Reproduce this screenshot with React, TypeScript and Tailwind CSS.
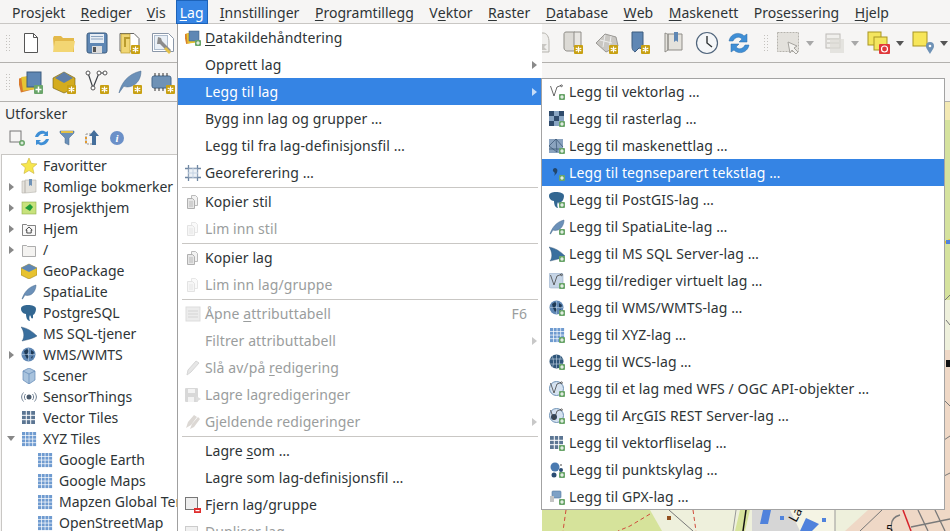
import React from 'react';

type N = React.ReactNode;

const S16 = ({ children }: { children: N }) => (
  <svg width="16" height="16" viewBox="0 0 16 16" className="shrink-0">{children}</svg>
);
const S24 = ({ children, w = 24 }: { children: N; w?: number }) => (
  <svg width={w} height="24" viewBox={`0 0 ${w} 24`} className="shrink-0">{children}</svg>
);

const Plus = ({ x = 10, y = 10 }: { x?: number; y?: number }) => (
  <g>
    <rect x={x} y={y} width="6" height="6" rx="1" fill="#6aa56a" />
    <path d={`M${x + 3} ${y + 1.2}v3.6M${x + 1.2} ${y + 3}h3.6`} stroke="#fff" strokeWidth="1.2" />
  </g>
);
const Ast = ({ x = 15, y = 15 }: { x?: number; y?: number }) => (
  <g>
    <rect x={x} y={y} width="9" height="9" rx="1" fill="#c8a012" />
    <path d={`M${x + 4.5} ${y + 1.5}v6M${x + 1.7} ${y + 3}l5.6 3M${x + 7.3} ${y + 3}l-5.6 3`} stroke="#fff" strokeWidth="1.2" />
  </g>
);
const Feather = ({ c = '#6b90b8' }: { c?: string }) => (
  <path d="M1 15C3 9 7 3 15 1c0 5-3 9-6 10-2 .7-4 .5-5 0L1.500 15z" fill={c} stroke="#47688c" strokeWidth=".5" />
);
const Globe = () => (
  <g>
    <circle cx="7.500" cy="7.500" r="7" fill="#5f87b4" />
    <path d="M3 4l3-2 2 2-2 3 2 3-2 2-2-4zM10 3l3 2-1 3-2-1zM10 10l2-1-1 3z" fill="#1f3a56" />
    <path d="M1 7.500h13M7.500 1v13" stroke="#c6d6e6" strokeWidth=".5" />
  </g>
);
const Elephant = () => (
  <path d="M0 4c0-3 3-4 7-4s8 1 8 4-2 6-3 6v3c-1 1-2 0-2-1l-1-2c-1 2-1 4 0 6-3 0-4-4-4-7C2 9 0 6 0 4z" fill="#336791" />
);
const Sail = () => (
  <path d="M0 1c6 1 11 4 16 9-3 2-10 4-15 5 3-4 2-10-1-14z" fill="#3a6f9e" stroke="#28496b" strokeWidth=".4" />
);
const Grid = ({ c = '#6f9bd0' }: { c?: string }) => (
  <g fill={c}>
    {[1, 4.700, 8.400, 12.100].map(x => [1, 4.700, 8.400, 12.100].map(y => <rect key={`${x}${y}`} x={x} y={y} width="3" height="3" />))}
  </g>
);
const VGrid = () => (
  <g>
    <rect x="1" y="1" width="13" height="13" fill="#5c7693" />
    <path d="M5.300 1v13M9.700 1v13M1 5.300h13M1 9.700h13" stroke="#fff" />
  </g>
);
const CopyDoc = ({ off = false }: { off?: boolean }) => (
  <g opacity={off ? 0.35 : 1}>
    <path d="M6.500 1.500h4l2 2v8h-6z" fill="#f2f2f2" stroke="#bbb" />
    <path d="M2.500 4.500h5l2 2v8h-7z" fill="#e6e6e6" stroke="#b0b0b0" />
    <path d="M4 8h4M4 10h4M4 12h4" stroke="#bbb" />
  </g>
);
const VNode = () => (
  <g fill="none" stroke="#444" strokeWidth=".8">
    <path d="M1.500 2L5 12l3-9 4-1.500" />
    <circle cx="12.500" cy="1.800" r=".9" />
  </g>
);

type MI = { t?: N; ic?: N; off?: boolean; sub?: boolean; hi?: boolean; key2?: string; sep?: boolean };
const U = ({ children }: { children: N }) => <span className="underline underline-offset-2">{children}</span>;

const mainMenu: MI[] = [
  { t: <><U>D</U>atakildehåndtering</>, ic: <S16><rect x="0" y="3" width="10" height="10" fill="#d9822b" transform="rotate(-12 5 8)" /><rect x="2" y="3" width="10" height="10" fill="#e6c533" transform="rotate(-6 7 8)" /><rect x="4" y="1" width="10" height="10" fill="#5f87b4" stroke="#3d5c7e" strokeWidth=".5" /><Plus /></S16> },
  { t: 'Opprett lag', sub: true },
  { t: 'Legg til lag', sub: true, hi: true },
  { t: 'Bygg inn lag og grupper …' },
  { t: 'Legg til fra lag-definisjonsfil …' },
  { t: 'Georeferering …', ic: <S16><path d="M0 3.500h16M0 12.500h16M3.500 0v16M12.500 0v16" stroke="#6f87a3" strokeWidth="1.300" /><path d="M3.500 3.500h9v9h-9z" fill="#dfe7f0" opacity=".6" /><path d="M8 3v10M3 8h10" stroke="#c4d2e2" /></S16> },
  { sep: true },
  { t: 'Kopier stil', ic: <S16><CopyDoc /></S16> },
  { t: 'Lim inn stil', off: true, ic: <S16><CopyDoc off /></S16> },
  { sep: true },
  { t: 'Kopier lag', ic: <S16><CopyDoc /></S16> },
  { t: 'Lim inn lag/gruppe', off: true, ic: <S16><CopyDoc off /></S16> },
  { sep: true },
  { t: <>Åpne <U>a</U>ttributtabell</>, off: true, key2: 'F6', ic: <S16><rect x="1" y="1" width="14" height="14" fill="#ececec" stroke="#ddd" /><path d="M3 5h10M3 8h10M3 11h10" stroke="#d4d4d4" /></S16> },
  { t: 'Filtrer attributtabell', off: true, sub: true },
  { t: <>Slå av/på <U>r</U>edigering</>, off: true, ic: <S16><path d="M2 15l1-5 8-9 3 2-8 9z" fill="#e6e6e6" stroke="#d6d6d6" /></S16> },
  { t: 'Lagre lagredigeringer', off: true, ic: <S16><rect x="0" y="1" width="13" height="14" rx="1" fill="#d8d8d8" /><rect x="3" y="2" width="7" height="4" fill="#f3f3f3" /><rect x="3" y="10" width="6" height="5" fill="#f3f3f3" /><path d="M11 9l5 3-5 3z" fill="#ddd" /></S16> },
  { t: 'Gjeldende redigeringer', off: true, sub: true, ic: <S16><path d="M1 14l2-6 6-7 3 2-6 8zM5 15l2-5 6-7 2 2-6 8z" fill="#dcd8d4" /></S16> },
  { sep: true },
  { t: <>Lagre <U>s</U>om …</> },
  { t: 'Lagre som lag-definisjonsfil …' },
  { t: 'Fjern lag/gruppe', ic: <S16><rect x=".5" y=".5" width="12" height="12" fill="#eee" stroke="#777" /><rect x="9" y="11" width="7" height="5" fill="#e02f2f" /><rect x="10.500" y="13" width="4" height="1.200" fill="#fff" /></S16> },
  { t: 'Dupliser lag', off: true, ic: <S16><rect x=".5" y="2.500" width="12" height="12" fill="#f0f0f0" stroke="#ccc" /></S16> },
];

const subMenu: MI[] = [
  { t: 'Legg til vektorlag …', ic: <S16><VNode /><Plus /></S16> },
  { t: 'Legg til rasterlag …', ic: <S16><g fill="#2f4b6c"><rect x="0" y="0" width="5" height="5" /><rect x="10" y="0" width="5" height="5" /><rect x="5" y="5" width="5" height="5" /><rect x="0" y="10" width="5" height="5" /></g><g fill="#8aa6c4"><rect x="5" y="0" width="5" height="5" /><rect x="0" y="5" width="5" height="5" /><rect x="10" y="5" width="5" height="5" /><rect x="5" y="10" width="5" height="5" /></g><Plus /></S16> },
  { t: 'Legg til maskenettlag …', ic: <S16><rect x="0" y="1" width="14" height="14" fill="#8aa3bf" /><path d="M0 8l7-7 1 13zM7 1l7 8M0 11h14" stroke="#34506f" strokeWidth=".7" fill="none" /><Plus /></S16> },
  { t: 'Legg til tegnseparert tekstlag …', hi: true, ic: <S16><path d="M6 3c3 0 3 4 1 6l-2 2c1-2 1-3 0-4-2-1-1-4 1-4z" fill="#22466b" /><Plus /></S16> },
  { t: 'Legg til PostGIS-lag …', ic: <S16><Elephant /><Plus /></S16> },
  { t: 'Legg til SpatiaLite-lag …', ic: <S16><Feather /><Plus /></S16> },
  { t: 'Legg til MS SQL Server-lag …', ic: <S16><Sail /><Plus /></S16> },
  { t: 'Legg til/rediger virtuelt lag …', ic: <S16><rect x="0" y="0" width="14" height="15" rx="2" fill="#c6d5e6" stroke="#8aa3bf" strokeWidth=".5" /><VNode /><Plus /></S16> },
  { t: 'Legg til WMS/WMTS-lag …', ic: <S16><Globe /><Plus /></S16> },
  { t: 'Legg til XYZ-lag …', ic: <S16><Grid /><Plus /></S16> },
  { t: 'Legg til WCS-lag …', ic: <S16><circle cx="7.500" cy="7.500" r="7" fill="#2f5679" /><path d="M1 5h13M1 10h13M7.500 1v13M3 2c2 4 2 8 0 12M12 2c-2 4-2 8 0 12" stroke="#c6d6e6" strokeWidth=".6" fill="none" /><Plus /></S16> },
  { t: 'Legg til et lag med WFS / OGC API-objekter …', ic: <S16><circle cx="7.500" cy="7.500" r="7" fill="#d5e2f0" stroke="#6f92b6" /><VNode /><Plus /></S16> },
  { t: <>Legg til Ar<U>c</U>GIS REST Server-lag …</>, ic: <S16><circle cx="7.500" cy="7.500" r="7" fill="#d5e2f0" stroke="#6f92b6" /><circle cx="5" cy="9" r="3" fill="#33475c" /><VNode /><Plus /></S16> },
  { t: 'Legg til vektorfliselag …', ic: <S16><VGrid /><Plus /></S16> },
  { t: 'Legg til punktskylag …', ic: <S16><circle cx="6" cy="5" r="4.500" fill="#4a7ab0" /><circle cx="5" cy="13" r="2.500" fill="#2a4c73" /><circle cx="12" cy="3" r="1" fill="#888" /><circle cx="12" cy="8" r="2" fill="#2a4c73" /><Plus /></S16> },
  { t: 'Legg til GPX-lag …', ic: <S16><rect x="3" y="2" width="9" height="7" rx="1" fill="#7ea1c6" stroke="#557aa0" strokeWidth=".6" /><path d="M1 7h4v6H1z" fill="#c5c5c5" /><Plus /></S16> },
];

const tree: { t: string; ic: N; arrow?: 'r' | 'd'; lvl?: boolean }[] = [
  { t: 'Favoritter', ic: <S16><path d="M8 0l2.300 5.400 5.700.5-4.300 3.800 1.300 5.800L8 12.500 3 15.500l1.300-5.800L0 5.900l5.700-.5z" fill="#f6e64d" stroke="#c9b23a" strokeWidth=".6" /></S16> },
  { t: 'Romlige bokmerker', arrow: 'r', ic: <S16><path d="M1 2h3v12H1zM4 1h11v12l-11 1z" fill="#e4e2dc" stroke="#b5b3ad" strokeWidth=".6" /><path d="M8 0h3v7l-1.500-1L8 7z" fill="#6f92b6" /></S16> },
  { t: 'Prosjekthjem', arrow: 'r', ic: <S16><rect x="1" y="2" width="14" height="12" fill="#c7e27c" stroke="#8fb04c" strokeWidth=".6" /><path d="M4 8l5-4 3 3-3 4z" fill="#1e9c39" /></S16> },
  { t: 'Hjem', arrow: 'r', ic: <S16><path d="M1.500 3.500h4l1 1h8v10h-13z" fill="#f8f8f8" stroke="#666" strokeWidth=".8" /><path d="M8 6L4.800 9h1v3h4.400V9h1z" fill="none" stroke="#222" strokeWidth=".8" /></S16> },
  { t: '/', arrow: 'r', ic: <S16><path d="M1.500 3.500h4l1 1h8v10h-13z" fill="#f4f3f1" stroke="#999" strokeWidth=".8" /></S16> },
  { t: 'GeoPackage', ic: <S16><path d="M0 5l8-4 8 4v7l-8 4-8-4z" fill="#e7c22f" stroke="#8c7416" strokeWidth=".5" /><path d="M0 5l8-4 8 4-8 4z" fill="#5f87b4" /></S16> },
  { t: 'SpatiaLite', ic: <S16><Feather /></S16> },
  { t: 'PostgreSQL', ic: <S16><Elephant /></S16> },
  { t: 'MS SQL-tjener', ic: <S16><Sail /></S16> },
  { t: 'WMS/WMTS', arrow: 'r', ic: <S16><Globe /></S16> },
  { t: 'Scener', ic: <S16><path d="M8 0l6 3v9l-6 4-6-4V3z" fill="#a9c3dd" stroke="#5f87b4" strokeWidth=".7" /><path d="M2 3l6 3 6-3M8 6v10" stroke="#5f87b4" fill="none" strokeWidth=".7" /></S16> },
  { t: 'SensorThings', ic: <S16><circle cx="8" cy="8" r="2.500" fill="#4a5a6c" /><path d="M4.500 5c-1.500 2-1.500 4 0 6M11.500 5c1.500 2 1.500 4 0 6M2.500 3.500c-2.500 3-2.500 6 0 9M13.500 3.500c2.500 3 2.500 6 0 9" fill="none" stroke="#6f7f92" /></S16> },
  { t: 'Vector Tiles', ic: <S16><VGrid /></S16> },
  { t: 'XYZ Tiles', arrow: 'd', ic: <S16><Grid /></S16> },
  { t: 'Google Earth', lvl: true, ic: <S16><Grid /></S16> },
  { t: 'Google Maps', lvl: true, ic: <S16><Grid /></S16> },
  { t: 'Mapzen Global Terrain', lvl: true, ic: <S16><Grid /></S16> },
  { t: 'OpenStreetMap', lvl: true, ic: <S16><Grid /></S16> },
];

const menuBar: { t: N; on?: boolean; wide?: boolean }[] = [
  { t: <>Pros<U>j</U>ekt</> },
  { t: <><U>R</U>ediger</> },
  { t: <><U>V</U>is</> },
  { t: <><U>L</U>ag</>, on: true },
  { t: <><U>I</U>nnstillinger</>, wide: true },
  { t: <><U>P</U>rogramtillegg</>, wide: true },
  { t: <>V<U>e</U>ktor</>, wide: true },
  { t: <><U>R</U>aster</>, wide: true },
  { t: <><U>D</U>atabase</>, wide: true },
  { t: <><U>W</U>eb</>, wide: true },
  { t: <><U>M</U>askenett</>, wide: true },
  { t: <>Pro<U>s</U>essering</>, wide: true },
  { t: <><U>H</U>jelp</>, wide: true },
];

const Grip = () => (
  <div className="w-[5px] h-[17px] shrink-0 grid grid-cols-2 gap-y-px content-between">
    {Array.from({ length: 12 }).map((_, i) => <span key={i} className="w-px h-px bg-[#c4c2be]" />)}
  </div>
);
const Drop = ({ off }: { off?: boolean }) => (
  <svg width="8" height="5" viewBox="0 0 8 5" className="shrink-0"><path d="M0 0h8L4 5z" fill={off ? '#a8a8a8' : '#555'} /></svg>
);
const Btn = ({ children, w = 33 }: { children: N; w?: number }) => (
  <div className="flex items-center justify-center shrink-0" style={{ width: w }}>{children}</div>
);

const MenuRow = ({ m, main }: { m: MI; main?: boolean }) => (
  <div className={`h-[27px] flex items-center pr-[5px] tracking-[0.1px] ${main ? 'pl-[7px]' : 'pl-[8px]'} ${m.hi ? 'bg-[#3584e4] text-white' : m.off ? 'text-[#9a9d9d]' : 'text-[#2e3436]'}`}>
    <div className="w-[20px] shrink-0 flex">{m.ic}</div>
    <span className="whitespace-nowrap">{m.t}</span>
    <span className="flex-1" />
    {m.key2 && <span className="mr-[10px]">{m.key2}</span>}
    {m.sub && (
      <svg width="5" height="8" viewBox="0 0 5 8"><path d="M0 0l5 4-5 4z" fill={m.hi ? '#c6dcf7' : m.off ? '#c8c8c8' : '#8a8a8a'} /></svg>
    )}
  </div>
);

export default function App() {
  return (
    <div className="relative w-[950px] h-[531px] overflow-hidden flex flex-col bg-[#f6f5f4] text-[14px] text-[#2e3436]" style={{ fontFamily: '"Noto Sans", sans-serif' }}>
      {/* Menylinje */}
      <div className="h-[24px] shrink-0 flex pl-[4.500px] border-b border-[#c9c7c4] tracking-[0.03px]">
        {menuBar.map((m, i) => (
          <div key={i} className={`h-[24px] flex items-center whitespace-nowrap ${m.on ? 'bg-[#3584e4] text-white border border-[#1e63b8] px-[3px] ml-[2.500px] mr-[4.500px]' : m.wide ? 'px-[7.750px]' : 'px-[7.500px]'}`}>{m.t}</div>
        ))}
      </div>

      {/* Verktøylinje 1 */}
      <div className="h-[39px] shrink-0 flex items-center pl-[6px] border-b border-[#b3b1ae]">
        <Grip />
        <div className="w-[3px]" />
        <Btn><S24><path d="M5.500 2.500h9l4 4v15h-13z" fill="#fff" stroke="#555" /><path d="M14.500 2.500v4h4" fill="none" stroke="#555" /></S24></Btn>
        <Btn><S24><path d="M1 7l1-2h7l2 2h11v14H2z" fill="#e3b94a" /><path d="M3 10h20l-2 11H1z" fill="#f3d673" /></S24></Btn>
        <Btn><S24><rect x="2" y="2" width="20" height="20" rx="2" fill="#5f87b4" stroke="#3d5c7e" /><rect x="5" y="3" width="14" height="9" fill="#e7edf4" /><path d="M6 5.500h12M6 8h12" stroke="#8aa3bf" /><rect x="7" y="15" width="10" height="7" fill="#dcdcdc" /><rect x="8" y="16" width="3" height="5" fill="#555" /></S24></Btn>
        <Btn><S24><path d="M2 2.500h14l5 5V20H2z" fill="#fff" stroke="#666" /><rect x="3" y="3" width="9" height="19" fill="#f0d674" stroke="#b99b2e" strokeWidth=".7" /><path d="M12 7H7v9" fill="none" stroke="#b99b2e" strokeWidth="2" /><Ast x={13} y={14} /></S24></Btn>
        <Btn><S24><path d="M1.500 2.500h16l5 5v13h-21z" fill="#fff" stroke="#8a97a8" /><rect x="3.500" y="4.500" width="13" height="14" fill="#eaf0f6" stroke="#aebccd" /><path d="M7 6l3 1 1 3 9 9-2 3-9-9-3 0z" fill="#8c8c8c" /><path d="M15 16l5 5-2 2-5-5z" fill="#e3c148" /></S24></Btn>
        <div className="w-[345px] shrink-0" />
        <Btn><S24><path d="M3 2h11c4 0 6 4 6 9v10H3z" fill="#f0efed" stroke="#b5b3ad" /><path d="M12 13h6l-3 3 3 3h-6z" fill="#c8c6c2" /></S24></Btn>
        <Btn><S24><path d="M4 1c-2 0-2 2-2 2v14c0 2 2 3 3 3h9V3c0-1-1-2-2-2z" fill="#dcdad5" stroke="#8f8d88" /><path d="M12 1h7v15h-7z" fill="#e8e6e2" stroke="#8f8d88" /><Ast x={12} y={14} /></S24></Btn>
        <Btn w={34}><S24><path d="M1 12l9-9 11 3 2 9-12 6z" fill="#c9c7c3" stroke="#9a9894" /><path d="M5 9l12 3M10 4l-2 12M16 5l-2 14" stroke="#eee" /><Ast x={14} y={14} /></S24></Btn>
        <Btn><S24><path d="M6 1h8v17l-4-1-4 4c-3-2-3-4-3-6V1z" fill="#5f87b4" stroke="#3d5c7e" /><Ast x={12} y={14} /></S24></Btn>
        <Btn><S24><path d="M3 2c2 1 3 1 3 1v16l-3 2zM6 3h14v16H6z" fill="#e4e2dc" stroke="#8f8d88" /><path d="M12 1h4v10l-2-1.500-2 1.500z" fill="#5f87b4" /></S24></Btn>
        <Btn><S24><circle cx="12" cy="12" r="10.500" fill="#f4f6f8" stroke="#50657c" strokeWidth="1.200" /><path d="M12 5v7l5 4" fill="none" stroke="#2e3436" strokeWidth="1.400" /></S24></Btn>
        <Btn w={32}><S24><path d="M2 10C3 4 9 1 14 3c2 .7 3 2 3 2l3-2v8h-8l3-3c-3-3-7-2-9 2z" fill="#3f8fd6" stroke="#2a6ba7" strokeWidth=".5" /><path d="M22 14c-1 6-7 9-12 7-2-.7-3-2-3-2l-3 2v-8h8l-3 3c3 3 7 2 9-2z" fill="#3f8fd6" stroke="#2a6ba7" strokeWidth=".5" /></S24></Btn>
        <div className="w-[9px]" />
        <Grip />
        <div className="w-[7px]" />
        <S24><rect x="1.500" y="1.500" width="21" height="19" fill="#e3e1dc" stroke="#b5b3ad" strokeDasharray="2 1" /><path d="M12 11l2 11 2-3 4 4 2-2-4-4 3-2z" fill="#f3f2ef" stroke="#a5a39e" /></S24>
        <div className="w-[6px]" />
        <Drop off />
        <div className="w-[11px]" />
        <S24 w={20}><rect x="1" y="3" width="14" height="14" fill="#f0efec" stroke="#bcbab5" /><path d="M2 8h12M2 12h12" stroke="#bcbab5" /><rect x="5" y="8" width="14" height="14" fill="#dddbd5" opacity=".7" /></S24>
        <div className="w-[6px]" />
        <Drop off />
        <div className="w-[8px]" />
        <S24><rect x="1" y="1" width="13" height="13" fill="#f4e55f" stroke="#a89522" /><rect x="7" y="6" width="13" height="13" fill="#f4e55f" stroke="#a89522" /><rect x="12" y="13" width="11" height="10" rx="1" fill="#e0383b" /><circle cx="17.500" cy="18" r="3" fill="none" stroke="#fff" strokeWidth="1.200" /></S24>
        <div className="w-[5px]" />
        <Drop />
        <div className="w-[8px]" />
        <S24><rect x="1" y="1" width="14" height="14" fill="#f7e65a" stroke="#a89522" /><path d="M18 23c-3-5-4-6-4-8a4 4 0 0 1 8 0c0 2-1 3-4 8z" fill="#6f92b6" /><circle cx="18" cy="15" r="1.300" fill="#fff" /></S24>
        <div className="w-[4px]" />
        <Drop />
      </div>

      {/* Verktøylinje 2 */}
      <div className="h-[39px] shrink-0 flex items-center pl-[6px] border-b border-[#b3b1ae]">
        <Grip />
        <div className="w-[3px]" />
        <Btn><S24><rect x="0" y="7" width="14" height="14" fill="#d9792b" transform="rotate(-14 7 14)" /><rect x="3" y="6" width="14" height="14" fill="#e6c533" transform="rotate(-7 10 13)" /><rect x="8" y="2" width="14" height="15" fill="#5f87b4" stroke="#3d5c7e" /><rect x="15" y="15" width="9" height="9" rx="1" fill="#6aa56a" /><path d="M19.500 16.500v6M16.500 19.500h6" stroke="#fff" strokeWidth="1.500" /></S24></Btn>
        <Btn><S24><path d="M1 8l11-6 11 6v10l-11 5-11-5z" fill="#d4ac1f" stroke="#6d5a10" strokeWidth=".6" /><path d="M3 8l9-6 9 6-9 5z" fill="#5f7fa8" /><Ast /></S24></Btn>
        <Btn><S24><path d="M3 3l5 15 6-15h6" fill="none" stroke="#3c4147" strokeWidth="1.200" /><circle cx="3" cy="3" r="2" fill="#fff" stroke="#555" /><circle cx="8" cy="18" r="2" fill="#fff" stroke="#555" /><circle cx="14" cy="3" r="2" fill="#fff" stroke="#555" /><circle cx="20" cy="3" r="2" fill="#fff" stroke="#555" /><Ast /></S24></Btn>
        <Btn><S24><path d="M1 23C3 14 9 4 23 1c0 8-4 13-9 15-4 1.500-7 1-8 0z" fill="#6b90b8" stroke="#47688c" strokeWidth=".5" /><Ast /></S24></Btn>
        <Btn><S24><rect x="1" y="6" width="19" height="12" rx="2" fill="#6f92b6" stroke="#47688c" /><path d="M4 3v3M8 3v3M12 3v3M16 3v3M4 18v3M8 18v3M12 18v3" stroke="#333" /><Ast /></S24></Btn>
        <div className="w-[376px] shrink-0" />
        <div className="flex gap-[14px] pt-[22px] opacity-50">
          {[0, 1, 2, 3, 4, 5, 6].map(i => <div key={i} className="w-[20px] h-[22px] rounded-sm border border-[#b5b3ad]" />)}
        </div>
        <div className="ml-[30px] mt-[22px] w-[20px] h-[22px] border border-[#3a8cdc] rounded-sm" />
        <div className="ml-[13px] mt-[22px] w-[20px] h-[22px] border border-[#e02f2f] rounded-sm" />
        <div className="ml-[13px] mt-[22px] w-[20px] h-[22px] border border-[#d0cec9] rounded-sm" />
        <div className="ml-[20px] mt-[22px] w-[20px] h-[22px] border border-[#d0cec9] rounded-sm" />
      </div>

      {/* Utforsker og kart */}
      <div className="flex-1 min-h-0 flex">
        <aside className="w-[177px] shrink-0 flex flex-col overflow-hidden">
          <div className="h-[22px] shrink-0 pl-[5px] flex items-center">Utforsker</div>
          <div className="h-[30px] shrink-0 flex items-center pl-[9px] pb-[2px] gap-[9px]">
            <S16><rect x="1" y="1" width="11" height="11" fill="#f6f5f4" stroke="#777" /><circle cx="13" cy="13" r="3" fill="#6aa56a" /><path d="M13 11.500v3M11.500 13h3" stroke="#fff" /></S16>
            <S16><path d="M1 7C2 3 6 0 10 1l2 1 2-1v5H9l2-2c-3-1-5 0-7 3zM15 9c-1 4-5 7-9 6l-2-1-2 1v-5h5l-2 2c3 1 5 0 7-3z" fill="#3f8fd6" /></S16>
            <S16><path d="M1 1h14v2L10 8v7l-4-2V8L1 3z" fill="#6b90b8" stroke="#47688c" strokeWidth=".5" /><path d="M2 1h12v2H2z" fill="#e3c148" /></S16>
            <S16><path d="M2 4h7v10H2z" fill="none" stroke="#999" strokeDasharray="2 1" /><path d="M10 0l5 6h-3v9H8V6H5z" fill="#456f9c" /><rect x="1" y="7" width="2" height="2" fill="#e39a2e" /><rect x="1" y="11" width="2" height="2" fill="#e39a2e" /></S16>
            <S16><circle cx="8" cy="8" r="7" fill="#6b90c8" /><text x="8" y="12" textAnchor="middle" fontSize="11" fontStyle="italic" fontWeight="700" fill="#fff" fontFamily="Liberation Serif">i</text></S16>
          </div>
          <div className="flex-1 min-h-0 bg-white border border-[#c9c7c4] border-r-0 border-b-0 ml-px overflow-hidden">
            {tree.map(r => (
              <div key={r.t} className={`h-[21px] flex items-center whitespace-nowrap ${r.lvl ? 'pl-[35px]' : 'pl-[19px]'} relative`}>
                {r.arrow === 'r' && <svg width="5" height="8" viewBox="0 0 5 8" className="absolute left-[7px] top-[7px]"><path d="M0 0l5 4-5 4z" fill="#888" /></svg>}
                {r.arrow === 'd' && <svg width="8" height="5" viewBox="0 0 8 5" className="absolute left-[5px] top-[8px]"><path d="M0 0h8L4 5z" fill="#888" /></svg>}
                <span className="w-[22px] shrink-0 flex">{r.ic}</span>
                <span>{r.t}</span>
              </div>
            ))}
          </div>
        </aside>
        <div className="flex-1 min-w-0 bg-[#eef0dc]">
          <svg width="773" height="429" viewBox="177 102 773 429">
            <rect x="177" y="102" width="773" height="429" fill="#eef0dc" />
            <rect x="940" y="102" width="10" height="18" fill="#f3e9b4" />
            <rect x="940" y="120" width="10" height="180" fill="#d5e29e" />
            <rect x="940" y="350" width="10" height="181" fill="#efd8c6" />
            <path d="M541 510H650L662 531H541z" fill="#d6e39b" />
            <path d="M740 510H750L745 531H735z" fill="#d6e39b" />
            <path d="M758 510H835V531H758z" fill="#f5f4e4" />
            <path d="M752 510H790L800 531H752z" fill="#d6d6d6" />
            <path d="M845 531L868 510H950V531z" fill="#efd8c6" />
            <path d="M746 510L743 531" stroke="#111" strokeWidth="1.500" />
            <path d="M736 510L733 531M835 510V531" stroke="#999" />
            <path d="M669 510l24 21M860 531l22-21" stroke="#777" fill="none" />
            <path d="M566 510l-3 21M693 510l3 21M650 514l-20 12-12 5" stroke="#d04b3c" strokeDasharray="4 3" fill="none" />
            <rect x="667" y="516" width="4" height="4" fill="#92501f" />
            <path d="M763 510h8l-3 14h-8z" fill="#5082dc" />
            <path d="M806 518l13 6-7 7h-12z" fill="#5082dc" />
            <rect x="780" y="516" width="4" height="4" fill="#5082dc" />
            <rect x="822" y="518" width="4" height="4" fill="#5082dc" />
            <text x="0" y="0" transform="translate(796 523) rotate(-62)" fontSize="13" fill="#111" fontFamily="Noto Sans">Lar</text>
            <path d="M903 510l8 21" stroke="#d6222a" strokeWidth="1.500" />
            <path d="M892 531c-2-8 0-14 8-16M911 527l39-8M918 510l10 21M935 510l10 21" stroke="#7a7a7a" strokeWidth="1.300" fill="none" />
            <text x="886" y="534" fontSize="12" fill="#111" fontFamily="Noto Sans">5</text>
            <path d="M944 243l6-3" stroke="#eec41a" strokeWidth="2" />
            <rect x="946" y="240" width="4" height="4" fill="#5082dc" />
            <path d="M945 300l5-5M946 320l4 5M944 400l6 6M944 440l6-4M944 476l6-3" stroke="#777" fill="none" />
            <rect x="946" y="360" width="4" height="7" fill="#111" />
          </svg>
        </div>
      </div>

      {/* Lag-meny */}
      <div className="absolute left-[177px] top-[24px] w-[365px] bg-white border-l border-[#a0a0a0] z-10">
        {mainMenu.map((m, i) => m.sep
          ? <div key={i} className="h-[2px] pl-[4px] pr-[4px] flex items-center"><div className="h-px w-full bg-[#c9c7c4]" /></div>
          : <MenuRow key={i} m={m} main />)}
      </div>

      {/* Legg til lag-undermeny */}
      <div className="absolute left-[541px] top-[78px] w-[404px] bg-white outline outline-1 -outline-offset-1 outline-[#a3a3a3] z-20">
        {subMenu.map((m, i) => <MenuRow key={i} m={m} />)}
      </div>
    </div>
  );
}
